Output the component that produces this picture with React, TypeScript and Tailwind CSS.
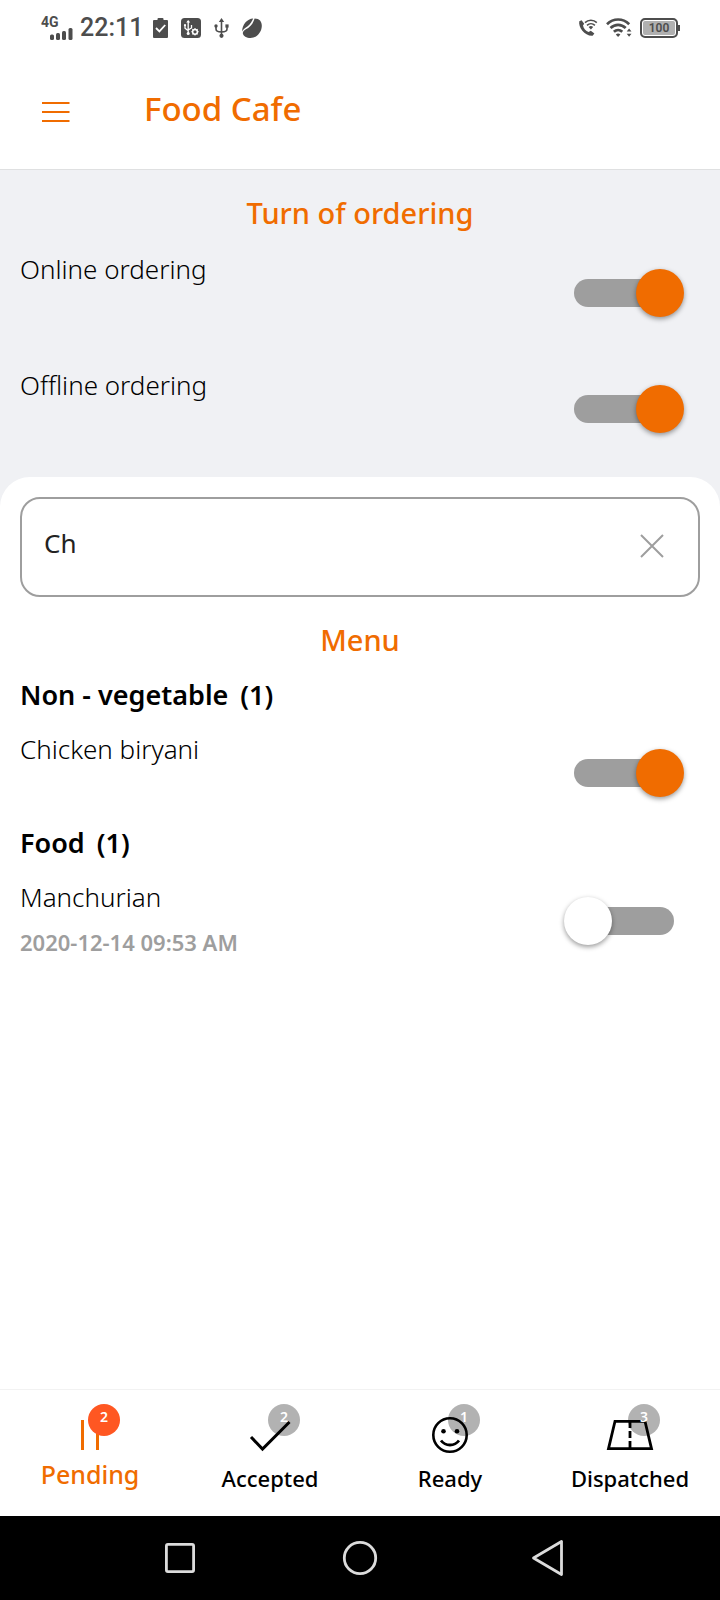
import { useState } from "react";
import type { ReactNode } from "react";

function SignalIcon() {
  return (
    <svg width="25" height="12" viewBox="0 0 25 12" fill="#4d4d4d" aria-hidden="true">
      <rect x="1" y="6.5" width="4" height="5.5" rx="1.5" />
      <rect x="7" y="5" width="4" height="7" rx="1.5" />
      <rect x="13" y="3" width="4" height="9" rx="1.5" />
      <rect x="19.5" y="0" width="4" height="12" rx="1.5" />
    </svg>
  );
}

function ClipboardIcon() {
  return (
    <svg width="15" height="20" viewBox="0 0 15 20" aria-hidden="true">
      <path d="M1 2h3.5V1a1 1 0 0 1 1-1h4a1 1 0 0 1 1 1v1H14a1 1 0 0 1 1 1v16a1 1 0 0 1-1 1H1a1 1 0 0 1-1-1V3a1 1 0 0 1 1-1z" fill="#4d4d4d" />
      <path d="M3 10l3.4 3.4L12.2 7" fill="none" stroke="#fff" strokeWidth="1.8" />
    </svg>
  );
}

function UsbTileIcon() {
  return (
    <svg width="20" height="20" viewBox="0 0 20 20" aria-hidden="true">
      <rect width="20" height="20" rx="3.5" fill="#4d4d4d" />
      <path d="M7.2 3v12M4 7v3.2l3.2 2.6M10.5 7v3l-3.3 2" fill="none" stroke="#fff" strokeWidth="1.3" />
      <path d="M5.2 4.6L7.2 2l2 2.6z" fill="#fff" />
      <circle cx="7.2" cy="15.5" r="1.5" fill="#fff" />
      <circle cx="4" cy="7.2" r="1.1" fill="#fff" />
      <circle cx="14" cy="13.8" r="2.4" fill="none" stroke="#fff" strokeWidth="1.5" />
      <path d="M14 10v1.5M14 16v1.6M10.3 13.8h1.5M16.2 13.8h1.5M11.4 11.2l1 1M15.6 15.4l1 1M16.6 11.2l-1 1M12.4 15.4l-1 1" stroke="#fff" strokeWidth="1.1" />
    </svg>
  );
}

function UsbIcon() {
  return (
    <svg width="15" height="20" viewBox="0 0 15 20" aria-hidden="true">
      <path d="M7.5 3v14M2 8v3c0 2.6 2.5 3 5.5 3M13 8v3c0 2.6-2.5 3-5.5 3" fill="none" stroke="#4d4d4d" strokeWidth="1.6" />
      <path d="M4.8 4L7.5 0l2.7 4z" fill="#4d4d4d" />
      <circle cx="7.5" cy="17.8" r="2.1" fill="#4d4d4d" />
      <circle cx="2" cy="8" r="1.7" fill="#4d4d4d" />
      <rect x="11.4" y="6.4" width="3.2" height="3.2" fill="#4d4d4d" />
    </svg>
  );
}

function BeanIcon() {
  return (
    <svg width="20" height="20" viewBox="0 0 20 20" aria-hidden="true">
      <path d="M0.2 13.5C0 7 5.2 0.8 11.2 0.6C10 3.2 8.5 6.3 5.7 8.2C3.2 9.9 1 11.2 0.2 13.5z" fill="#4d4d4d" />
      <path d="M12.6 0.4C17.8 0.4 20 3.8 19.8 8.2C19.5 14.5 14.5 20 8.5 20C4.6 20 1.2 18.2 0.8 15.2C1.1 12.1 4.2 11.3 6.8 9.4C10 7 11.4 4 12.6 0.4z" fill="#4d4d4d" />
    </svg>
  );
}

function CallWifiIcon() {
  return (
    <svg width="20" height="18" viewBox="0 0 20 18" aria-hidden="true">
      <path d="M3.6 1.2L1.3 2.3C0 8.5 7 17.4 14.6 16.8L16.4 14.4L12.8 11.8L10.6 13C7.8 12 5.4 9.2 5 6.4L6.2 4.8z" fill="#4d4d4d" />
      <path d="M7 3.6C10.2 0.5 15.6 0.5 18.8 3.6M9 6.3C11.3 4.2 14.6 4.2 16.9 6.3" fill="none" stroke="#4d4d4d" strokeWidth="1.6" />
      <path d="M10.6 8.1a3.4 3.4 0 0 1 4.6 0L12.9 10.6z" fill="#4d4d4d" />
    </svg>
  );
}

function WifiIcon() {
  return (
    <svg width="26" height="20" viewBox="0 0 26 20" aria-hidden="true">
      <path d="M1 6.2C7.4-0.1 16.8-0.1 23.2 6.2M4.5 10.1C8.9 5.9 15.3 5.9 19.7 10.1M7.9 13.8C10.4 11.5 13.8 11.5 16.3 13.8" fill="none" stroke="#4d4d4d" strokeWidth="2.7" />
      <path d="M9.8 16.4a3.5 3.5 0 0 1 4.6 0L12.1 19z" fill="#4d4d4d" />
      <path d="M20.7 13.6l2.4-3 2.4 3zM20.7 15.8l2.4 3 2.4-3z" fill="#4d4d4d" />
    </svg>
  );
}

function StatusBar() {
  return (
    <div className="flex h-14 items-center justify-between pr-10 pl-[41px] font-[Roboto,sans-serif] text-[#4d4d4d]">
      <div className="flex items-center">
        <div className="flex flex-col pr-1.5">
          <span className="text-[14px] leading-[11px] font-bold">4G</span>
          <span className="pl-2">
            <SignalIcon />
          </span>
        </div>
        <span className="text-[25px] leading-7 font-medium">22:11</span>
        <div className="flex items-center gap-[13px] pl-[10px]">
          <ClipboardIcon />
          <UsbTileIcon />
          <UsbIcon />
          <BeanIcon />
        </div>
      </div>
      <div className="flex items-center gap-2">
        <CallWifiIcon />
        <WifiIcon />
        <div className="flex items-center">
          <span className="flex h-5 w-[38px] items-center justify-center rounded-[5px] border-2 border-[#4d4d4d] bg-[#b0b0b0] text-[12px] leading-4 font-semibold ring-1 ring-white ring-inset">
            100
          </span>
          <span className="h-[6px] w-[2px] bg-[#4d4d4d]" />
        </div>
      </div>
    </div>
  );
}

function Toggle({ label, on }: { label: string; on: boolean }) {
  return (
    <label className="mt-[34px] mr-4 grid h-12 w-[120px] shrink-0 cursor-pointer items-center">
      <input type="checkbox" role="switch" aria-label={label} defaultChecked={on} className="peer col-start-1 row-start-1 h-12 appearance-none outline-none" />
      <span className="pointer-events-none col-start-1 row-start-1 mx-[10px] h-7 rounded-full bg-[#9e9e9e]" />
      <span className="pointer-events-none col-start-1 row-start-1 size-12 justify-self-start rounded-full bg-white shadow-[0_2px_5px_rgba(0,0,0,0.4)] peer-checked:justify-self-end peer-checked:bg-[#f06c00]" />
    </label>
  );
}

function SwitchRow({ label, on, note }: { label: string; on: boolean; note?: string }) {
  return (
    <div className="flex items-start justify-between px-5">
      <div className="pt-4">
        <p className="text-[26px] leading-9 font-light text-black">{label}</p>
        {note && <p className="mt-3 text-[22px] leading-[30px] font-semibold text-[#9e9e9e]">{note}</p>}
      </div>
      <Toggle label={label} on={on} />
    </div>
  );
}

function SectionTitle({ children }: { children: ReactNode }) {
  return <h2 className="text-center text-[29px] leading-[45px] font-medium text-[#f06c00]">{children}</h2>;
}

const groups = [
  { name: "Non - vegetable", items: [{ label: "Chicken biryani", on: true, note: undefined }] },
  { name: "Food", items: [{ label: "Manchurian", on: false, note: "2020-12-14 09:53 AM" }] },
];

const tabs = [
  {
    label: "Pending",
    count: 2,
    active: true,
    icon: <path d="M14.5 7v30M29.5 7v30" strokeWidth="3" />,
  },
  {
    label: "Accepted",
    count: 2,
    active: false,
    icon: <path d="M3 24l11.5 12L41.5 9" strokeWidth="3" />,
  },
  {
    label: "Ready",
    count: 1,
    active: false,
    icon: (
      <>
        <circle cx="22" cy="22" r="16.7" strokeWidth="2.6" />
        <circle cx="15.5" cy="18.3" r="2.3" fill="currentColor" stroke="none" />
        <circle cx="29" cy="18.3" r="2.3" fill="currentColor" stroke="none" />
        <path d="M13 27.5c4.5 6 13.5 6 18 0" strokeWidth="2.8" />
      </>
    ),
  },
  {
    label: "Dispatched",
    count: 3,
    active: false,
    icon: (
      <>
        <path d="M7 8.3h30L43.5 35.6H0.5z" strokeWidth="2.8" />
        <path d="M22 9v6M22 18v7M22 28v7" strokeWidth="2.8" />
      </>
    ),
  },
];

function BottomTabs() {
  return (
    <nav className="grid h-[127px] grid-cols-4 border-t border-[#f2f2f2] bg-white">
      {tabs.map((tab) => (
        <a key={tab.label} href={"#" + tab.label.toLowerCase()} className={tab.active ? "flex flex-col items-center pt-[23px] text-[#f06c00]" : "flex flex-col items-center pt-[23px] text-black"}>
          <span className="relative">
            <svg width="44" height="44" viewBox="0 0 44 44" fill="none" stroke="currentColor" className="overflow-visible" aria-hidden="true">
              {tab.icon}
            </svg>
            <span className={tab.active ? "absolute -top-[9px] left-5 size-8 rounded-full bg-[#ff5722] text-center text-[14px] leading-[26px] font-semibold text-white" : "absolute -top-[9px] left-5 size-8 rounded-full bg-black/30 text-center text-[14px] leading-[26px] font-semibold text-white"}>
              {tab.count}
            </span>
          </span>
          <span className={tab.active ? "text-[25px] leading-[34px] font-medium" : "text-[22px] leading-[42px] font-medium"}>{tab.label}</span>
        </a>
      ))}
    </nav>
  );
}

function SystemBar() {
  return (
    <div className="grid h-[84px] grid-cols-3 items-center justify-items-center bg-black px-[12.5%] text-[#dcdcdc]">
      <button type="button" aria-label="Recent apps">
        <svg width="40" height="40" viewBox="0 0 40 40" fill="none" stroke="currentColor" strokeWidth="2.8">
          <rect x="6.4" y="6.4" width="27.2" height="27.2" rx="1.5" />
        </svg>
      </button>
      <button type="button" aria-label="Home">
        <svg width="40" height="40" viewBox="0 0 40 40" fill="none" stroke="currentColor" strokeWidth="2.8">
          <circle cx="20" cy="20" r="15.7" />
        </svg>
      </button>
      <button type="button" aria-label="Back">
        <svg width="56" height="40" viewBox="0 0 56 40" fill="none" stroke="currentColor" strokeWidth="2.8" strokeLinejoin="round">
          <path d="M49.5 3.5v33L21.5 20z" />
        </svg>
      </button>
    </div>
  );
}

export default function App() {
  const [query, setQuery] = useState("Ch");

  return (
    <div className="flex min-h-screen flex-col bg-white font-['Noto_Sans',sans-serif]">
      <StatusBar />
      <header className="flex h-[114px] items-center border-b border-[#dfe0e1] pl-[42px]">
        <button type="button" aria-label="Open menu" className="mr-[74px] pb-0.5">
          <svg width="28" height="22" viewBox="0 0 28 22" stroke="#f06c00" strokeWidth="2">
            <path d="M0 2h27.5M0 11h27.5M0 20h27.5" />
          </svg>
        </button>
        <h1 className="pb-2 text-[33px] leading-10 font-medium text-[#f06c00]">Food Cafe</h1>
      </header>
      <main className="flex flex-1 flex-col bg-[#f0f1f4]">
        <section className="pt-5 pb-[10px]">
          <SectionTitle>Turn of ordering</SectionTitle>
          <div className="h-[116px]">
            <SwitchRow label="Online ordering" on />
          </div>
          <div className="h-[116px]">
            <SwitchRow label="Offline ordering" on />
          </div>
        </section>
        <section className="flex-1 rounded-t-[30px] bg-white pt-5">
          <div className="mx-5 flex h-[100px] items-center rounded-[20px] border-2 border-[#9e9e9e] pr-[34px] pl-[22px]">
            <input
              type="text"
              aria-label="Search menu"
              value={query}
              onChange={(event) => setQuery(event.target.value)}
              className="mb-2 min-w-0 flex-1 text-[26px] leading-9 text-[#222222] outline-none"
            />
            <button type="button" aria-label="Clear search" onClick={() => setQuery("")} className="mb-0.5">
              <svg width="24" height="24" viewBox="0 0 24 24" stroke="#9e9e9e" strokeWidth="2">
                <path d="M1 1l22 22M23 1L1 23" />
              </svg>
            </button>
          </div>
          <div className="pt-5 pb-[13px]">
            <SectionTitle>Menu</SectionTitle>
          </div>
          {groups.map((group) => (
            <div key={group.name} className="min-h-[148px]">
              <h3 className="flex gap-3 px-5 text-[27px] leading-10 font-semibold text-black">
                <span>{group.name}</span>
                <span>({group.items.length})</span>
              </h3>
              {group.items.map((item) => (
                <SwitchRow key={item.label} label={item.label} on={item.on} note={item.note} />
              ))}
            </div>
          ))}
        </section>
      </main>
      <BottomTabs />
      <SystemBar />
    </div>
  );
}
